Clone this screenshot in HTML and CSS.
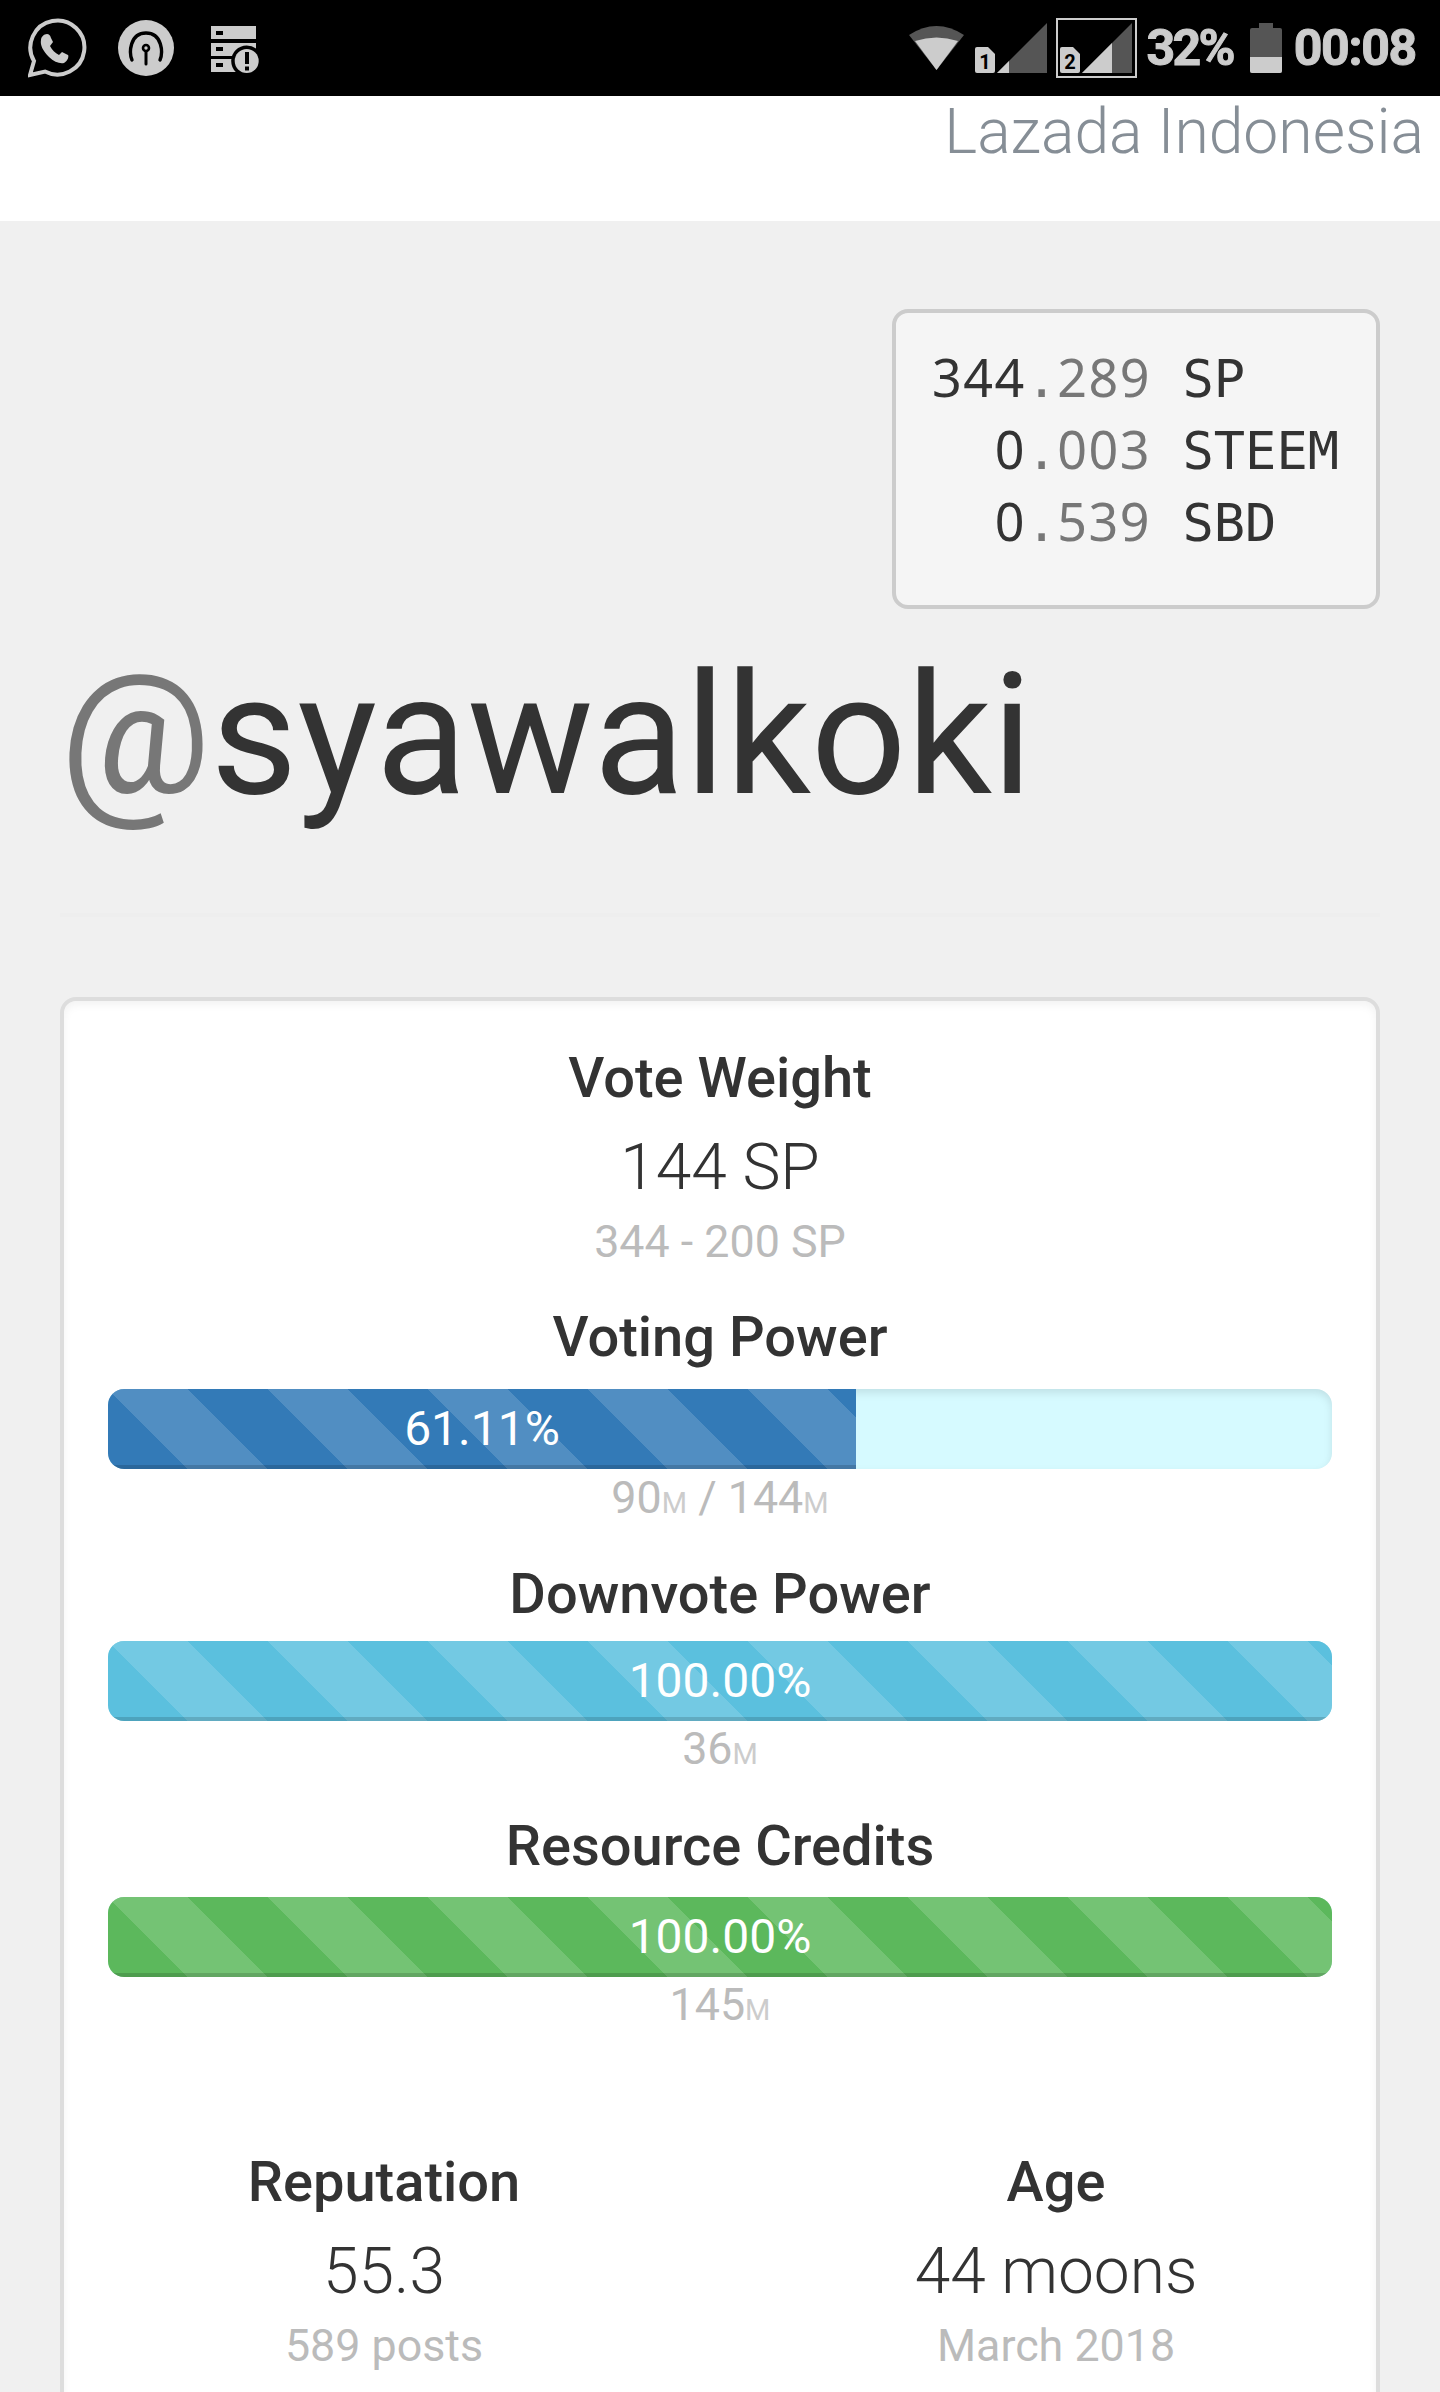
FILE: index.html
```html
<!DOCTYPE html>
<html lang="en">

<head>
    <meta charset="UTF-8">
    <meta name="viewport" content="width=device-width, initial-scale=1.0">
    <title>@syawalkoki</title>
    <link rel="stylesheet" href="styles.css">
</head>

<body>
    <!-- phone status bar -->
    <div class="status-bar">
        <div class="status-left">
            <svg class="icon-whatsapp" viewBox="0 0 60 60">
                <path d="M2 57 L6 43 A27 27 0 1 1 17 53.5 Z" fill="none" stroke="#ccc" stroke-width="4" />
                <path d="M19 16 c2 0 3 1 4 4 l2 4 -3 4 c2 4 5 7 9 9 l3 -3 6 3 c1 1 0 6 -4 8 c-4 1 -10 -1 -15 -6 c-6 -6 -9 -12 -8 -17 c0 -3 3 -6 6 -6z" fill="#ccc" />
            </svg>
            <svg class="icon-hotspot" viewBox="0 0 56 56">
                <circle cx="28" cy="28" r="28" fill="#ccc" />
                <path d="M14 40 C11 33 11.5 13 28 13 S45 33 42 40" fill="none" stroke="#000" stroke-width="3.4" stroke-linecap="round" />
                <path d="M28 30 V44" stroke="#000" stroke-width="3" stroke-linecap="round" />
                <circle cx="28" cy="28" r="3" fill="#ccc" stroke="#000" stroke-width="2.6" />
            </svg>
            <svg class="icon-storage" viewBox="0 0 48 47">
                <rect x="0" y="0" width="45" height="13" fill="#ccc" />
                <rect x="0" y="17" width="45" height="13" fill="#ccc" />
                <rect x="0" y="33" width="45" height="13" fill="#ccc" />
                <rect x="5" y="5" width="7" height="4" fill="#000" />
                <rect x="5" y="21" width="7" height="4" fill="#000" />
                <rect x="5" y="37" width="7" height="4" fill="#000" />
                <circle cx="35.7" cy="35" r="15.5" fill="#000" />
                <circle cx="35.7" cy="35" r="12" fill="#ccc" />
                <rect x="34" y="26" width="4" height="12" fill="#000" />
                <rect x="34" y="40.5" width="4" height="4" fill="#000" />
            </svg>
        </div>
        <div class="status-right">
            <svg class="icon-wifi" viewBox="0 0 55 44">
                <path d="M0 9 Q27.5 -9 55 9 L27.5 44 Z" fill="#555" />
                <path d="M6 15 Q27.5 8 49 15 L27.5 44 Z" fill="#ccc" />
            </svg>
            <svg class="icon-signal" viewBox="0 0 72 52">
                <path d="M0 26 Q0 24 2 24 H13 L20 31 V48 Q20 50 18 50 H2 Q0 50 0 48 Z" fill="#ccc" />
                <text x="10" y="46" text-anchor="middle" class="sim-num">1</text>
                <path d="M22 50 L72 0 V50 Z" fill="#555" />
                <path d="M22 50 L34 38 V50 Z" fill="#ccc" />
            </svg>
            <div class="sim-active">
                <svg class="icon-signal" viewBox="0 0 72 52">
                    <path d="M0 26 Q0 24 2 24 H13 L20 31 V48 Q20 50 18 50 H2 Q0 50 0 48 Z" fill="#ccc" />
                    <text x="10" y="46" text-anchor="middle" class="sim-num">2</text>
                    <path d="M22 50 L72 0 V50 Z" fill="#555" />
                    <path d="M22 50 L52 20 V50 Z" fill="#ccc" />
                </svg>
            </div>
            <span class="status-text pct">32%</span>
            <div class="battery">
                <div class="battery-level"></div>
            </div>
            <span class="status-text clock">00:08</span>
        </div>
    </div>

    <div class="site-header">Lazada Indonesia</div>

    <div class="content">
        <div class="balances">
            <div class="balance-row"><span class="digits">344</span><span class="dim">.<span class="digits">289</span></span> SP</div>
            <div class="balance-row">  <span class="digits">0</span><span class="dim">.<span class="digits">003</span></span> STEEM</div>
            <div class="balance-row">  <span class="digits">0</span><span class="dim">.<span class="digits">539</span></span> SBD</div>
        </div>

        <h1 class="username"><span class="at">@</span>syawalkoki</h1>
        <hr class="divider">

        <div class="panel">
            <div class="stat">
                <h4 class="stat-title">Vote Weight</h4>
                <div class="stat-value">144 SP</div>
                <div class="stat-sub">344 - 200 SP</div>
            </div>

            <div class="meter meter-voting">
                <h4 class="stat-title">Voting Power</h4>
                <div class="progress">
                    <div class="progress-bar bar-blue" style="width: 61.11%">61.11%</div>
                </div>
                <div class="meter-sub">90<span class="unit">M</span> / 144<span class="unit">M</span></div>
            </div>

            <div class="meter meter-downvote">
                <h4 class="stat-title">Downvote Power</h4>
                <div class="progress">
                    <div class="progress-bar bar-info" style="width: 100%">100.00%</div>
                </div>
                <div class="meter-sub">36<span class="unit">M</span></div>
            </div>

            <div class="meter meter-credits">
                <h4 class="stat-title">Resource Credits</h4>
                <div class="progress">
                    <div class="progress-bar bar-green" style="width: 100%">100.00%</div>
                </div>
                <div class="meter-sub">145<span class="unit">M</span></div>
            </div>

            <div class="stat-row">
                <div class="stat">
                    <h4 class="stat-title">Reputation</h4>
                    <div class="stat-value">55.3</div>
                    <div class="stat-sub">589 posts</div>
                </div>
                <div class="stat">
                    <h4 class="stat-title">Age</h4>
                    <div class="stat-value">44 moons</div>
                    <div class="stat-sub">March 2018</div>
                </div>
            </div>
        </div>
    </div>
</body>

</html>
```

FILE: styles.css
```css
html,
body {
    margin: 0;
    padding: 0;
    height: 2392px;
    overflow: hidden;
}

body {
    font-family: Roboto, "Liberation Sans", sans-serif;
    background-color: #f0f0f0;
    color: #333;
}

/* status bar */
.status-bar {
    height: 96px;
    background: #000;
    display: flex;
    justify-content: space-between;
    align-items: center;
    padding: 0 24px 0 28px;
}

.status-left,
.status-right {
    display: flex;
    align-items: center;
}

.icon-whatsapp {
    width: 60px;
    height: 60px;
}

.icon-hotspot {
    width: 56px;
    height: 56px;
    margin-left: 30px;
}

.icon-storage {
    width: 48px;
    height: 47px;
    margin-left: 37px;
    margin-top: 2px;
}

.icon-wifi {
    width: 55px;
    height: 44px;
}

.icon-signal {
    display: block;
    width: 72px;
    height: 52px;
    margin-top: 2px;
}

.status-right > .icon-signal {
    margin-left: 11px;
}

.sim-num {
    font-family: Roboto, sans-serif;
    font-weight: 700;
    font-size: 20px;
    fill: #000;
}

.sim-active {
    width: 73px;
    height: 56px;
    margin-left: 9px;
    padding: 0 2px;
    border: 2px solid #ccc;
    display: flex;
    align-items: center;
}

.status-text {
    font-weight: 700;
    font-size: 50px;
    line-height: 50px;
    color: #ccc;
    -webkit-text-stroke: 1px #ccc;
}

.pct {
    margin-left: 9px;
    letter-spacing: -2.7px;
}

.clock {
    margin-left: 12px;
    letter-spacing: -1.3px;
}

.battery {
    width: 32px;
    height: 45px;
    margin-left: 17px;
    margin-top: 5px;
    background: #555;
    border-radius: 2px;
    position: relative;
    display: flex;
    align-items: flex-end;
}

.battery::before {
    content: "";
    position: absolute;
    top: -5px;
    left: 9px;
    width: 14px;
    height: 5px;
    background: #555;
}

.battery-level {
    width: 100%;
    height: 16px;
    background: #ccc;
    border-radius: 0 0 2px 2px;
}

/* site header */
.site-header {
    height: 121px;
    padding: 4px 16px 0 0;
    background: #fff;
    text-align: right;
    font-weight: 300;
    font-size: 62.4px;
    line-height: 64px;
    color: #868e96;
}

.content {
    padding: 88px 60px 0;
}

.balances {
    box-sizing: border-box;
    width: 488px;
    height: 300px;
    margin: 0 0 0 auto;
    padding: 30px 36px 0;
    background: #f5f5f5;
    border: 4px solid #ccc;
    border-radius: 16px;
    font-family: "DejaVu Sans Mono", "Liberation Mono", monospace;
    font-size: 52px;
    line-height: 72px;
    color: #333;
}

.balance-row {
    height: 72px;
    white-space: pre;
}

/* noto digits have the plain zero, spaced out to the mono pitch */
.balances .digits {
    font-family: "Noto Sans", sans-serif;
    line-height: 0;
    letter-spacing: 1.56px;
}

.balances .dim {
    color: #777;
}

.username {
    margin: 34px 0 0;
    font-weight: 400;
    font-size: 168px;
    line-height: 185px;
    color: #333;
}

.username .at {
    color: #777;
}

.divider {
    margin: 85px 0 80px;
    border: 0;
    border-top: 4px solid #eee;
}

.panel {
    padding: 37px 44px 200px;
    background: #fff;
    border: 4px solid #ddd;
    border-radius: 16px;
    box-shadow: inset 0 4px 8px rgba(0, 0, 0, 0.05);
    text-align: center;
}

.stat-title {
    margin: 0;
    font-weight: 500;
    font-size: 56px;
    line-height: 80px;
    color: #333;
}

.stat-value {
    margin-top: 10px;
    font-weight: 300;
    font-size: 64px;
    line-height: 80px;
}

.stat-sub {
    margin-top: 6px;
    font-size: 44.8px;
    line-height: 56px;
    color: #bbb;
}

/* bars */
.meter-voting {
    margin-top: 27px;
}

.meter-downvote {
    margin-top: 28px;
}

.meter-credits {
    margin-top: 29px;
}

.progress {
    height: 80px;
    margin-top: 12px;
    border-radius: 16px;
    overflow: hidden;
    background-color: #d6faff;
    box-shadow: inset 0 4px 8px rgba(0, 0, 0, 0.1);
}

.meter-downvote .progress {
    margin-top: 7px;
}

.meter-credits .progress {
    margin-top: 11px;
}

.progress-bar {
    height: 100%;
    color: #fff;
    font-size: 48px;
    line-height: 80px;
    text-align: center;
    box-shadow: inset 0 -4px 0 rgba(0, 0, 0, 0.15);
    background-image: linear-gradient(45deg, rgba(255, 255, 255, 0.15) 25%, transparent 25%, transparent 50%, rgba(255, 255, 255, 0.15) 50%, rgba(255, 255, 255, 0.15) 75%, transparent 75%, transparent);
    background-size: 160px 160px;
}

.bar-blue {
    background-color: #337ab7;
}

.bar-info {
    background-color: #5bc0de;
}

.bar-green {
    background-color: #5cb85c;
}

.meter-sub {
    font-size: 44.8px;
    line-height: 56px;
    color: #bbb;
}

.meter-voting .meter-sub {
    margin-top: 1px;
}

.meter-sub .unit {
    font-size: 29px;
    line-height: 1;
    color: #ccc;
}

.stat-row {
    display: grid;
    grid-template-columns: 1fr 1fr;
    margin: 109px -60px 0;
}
```
